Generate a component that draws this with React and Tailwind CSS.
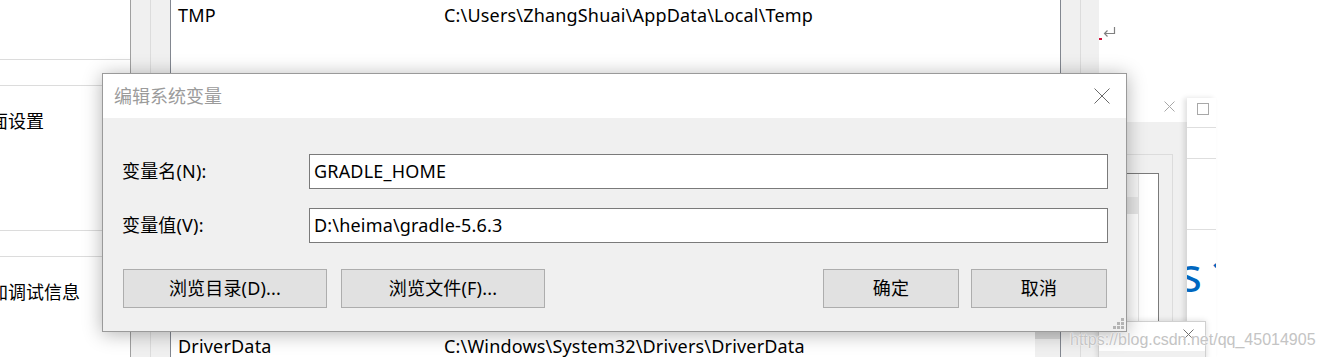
const CloseX = ({ size, color }) => (
  <svg width={size} height={size} viewBox={`0 0 ${size} ${size}`} fill="none">
    <path d={`M0.5 0.5L${size - 0.5} ${size - 0.5}M${size - 0.5} 0.5L0.5 ${size - 0.5}`} stroke={color} strokeWidth="1" />
  </svg>
);

const LeftWindow = () => (
  <div className="absolute left-0 top-0 w-[130px] h-[357px] bg-white overflow-hidden text-[18px] text-black whitespace-nowrap">
    <div className="h-[60px] border-b border-[#dcdcdc]" />
    <div className="h-[26px] border-b border-[#dcdcdc]" />
    <div className="h-[145px] border-b border-[#dcdcdc] pt-[23px]">
      <div className="-ml-[10px] leading-[24px]">面设置</div>
    </div>
    <div className="h-[26px] border-b border-[#dcdcdc]" />
    <div className="pt-[23px]">
      <div className="-ml-[10px] leading-[24px]">加调试信息</div>
    </div>
  </div>
);

const EnvList = () => (
  <div className="absolute left-[130px] top-0 w-[969px] h-[357px] bg-[#f0f0f0] border-l border-[#a0a0a0] flex overflow-hidden">
    <div className="w-[19px]" />
    <div className="w-px bg-[#dcdcdc]" />
    <div className="w-[19px]" />
    <div className="w-[891px] bg-white border-x border-[#828790] flex flex-col text-[18px] text-black tracking-[0.18px]">
      <div className="h-[30px] shrink-0 flex items-center">
        <div className="w-[273px] pl-[7px]">TMP</div>
        <div>C:\Users\ZhangShuai\AppData\Local\Temp</div>
      </div>
      <div className="h-[301px] shrink-0" />
      <div className="h-[30px] shrink-0 flex">
        <div className="w-[273px] pl-[7px] flex items-center">DriverData</div>
        <div className="flex-1 flex items-center">C:\Windows\System32\Drivers\DriverData</div>
        <div className="w-[25px] bg-[#f0f0f0] pt-px">
          <div className="h-[7px] bg-[#d6d6d6]" />
        </div>
      </div>
    </div>
    <div className="w-[19px]" />
    <div className="w-px bg-[#dcdcdc]" />
    <div className="w-[18px]" />
  </div>
);

const BackWindows = () => (
  <>
    <div className="absolute left-[1100px] top-0 w-[87px] h-[357px] bg-[#f0f0f0] flex flex-col">
      <div className="h-[122px] bg-white flex items-end justify-end pr-[12px] pb-[10px]">
        <CloseX size={11} color="#a8a8a8" />
      </div>
      <div className="flex-1 pt-[32px] pl-[10px] pr-[14px] flex flex-col">
        <div className="flex-1 border-t border-r border-[#dcdcdc] pt-[18px] pl-[10px] pr-[13px] flex flex-col">
          <div className="flex-1 border-t border-r border-[#7a7a7a] bg-white flex">
            <div className="flex-1 border-r border-[#e3e3e3] flex flex-col">
              <div className="h-[23px] bg-[#f5f5f5]" />
              <div className="h-[17px] bg-[#e6e6e6]" />
            </div>
            <div className="w-[19px]" />
          </div>
        </div>
      </div>
    </div>

    <svg className="absolute left-[1103px] top-[27px]" width="13" height="11" viewBox="0 0 13 11" fill="none">
      <path d="M11.5 0V6.5H1.5M4.5 3.5L1.5 6.5L4.5 9.5" stroke="#808080" strokeWidth="1.2" />
    </svg>
    <div className="absolute left-[1099px] top-[38px] w-[3px] h-[2px] bg-[#d0103a]" />

    <div className="absolute left-[1187px] top-[98px] w-[29px] h-[259px] bg-white overflow-hidden shadow-[-3px_0_5px_rgba(0,0,0,0.12)] flex flex-col">
      <div className="h-[30px] shrink-0 border-b border-[#dedede] pl-[10px] pt-[5px]">
        <div className="w-[12px] h-[12px] border border-[#a8a8a8]" />
      </div>
      <div className="h-[31px] shrink-0 border-b border-[#dedede]" />
      <div className="h-[71px] shrink-0 border-b border-[#dedede]" />
      <div className="mt-[20px] -ml-[8px] text-[48px] leading-none text-[#0067c0] whitespace-nowrap font-['Noto_Sans',sans-serif]">
        <span>s</span>
        <span className="ml-[7px]">1</span>
      </div>
    </div>

    <div className="absolute left-[1098px] top-[321px] w-[108px] h-[40px] bg-white border border-[#d0d0d0] shadow-[0_0_6px_rgba(0,0,0,0.15)] flex flex-col">
      <div className="h-[29px] flex justify-end pt-[7px] pr-[11px]">
        <CloseX size={11} color="#707070" />
      </div>
      <div className="flex-1 bg-[#f0f0f0]" />
    </div>
  </>
);

const Btn = ({ children, w }) => (
  <button className={`${w} h-[39px] bg-[#e1e1e1] border border-[#adadad] text-[18px] text-black flex items-center justify-center`}>
    {children}
  </button>
);

const EditDialog = () => (
  <div className="absolute left-[102px] top-[73px] w-[1025px] h-[259px] bg-[#f0f0f0] border border-[#9a9a9a] shadow-[0_2px_18px_rgba(0,0,0,0.3)] flex flex-col">
    <div className="h-[44px] bg-white flex items-center justify-between pl-[11px] pr-[16px]">
      <span className="text-[18px] text-[#9b9b9b]">编辑系统变量</span>
      <CloseX size={16} color="#6a6a6a" />
    </div>
    <div className="flex-1 pl-[19px] pr-[18px] pt-[36px] text-[18px] text-black tracking-[0.18px]">
      <div className="flex items-center">
        <label className="w-[187px]">变量名(N):</label>
        <div className="flex-1 h-[35px] bg-white border border-[#7a7a7a] flex items-center pl-[4px]">GRADLE_HOME</div>
      </div>
      <div className="flex items-center mt-[19px]">
        <label className="w-[187px]">变量值(V):</label>
        <div className="flex-1 h-[35px] bg-white border border-[#7a7a7a] flex items-center pl-[4px]">D:\heima\gradle-5.6.3</div>
      </div>
      <div className="flex justify-between mt-[26px] pl-px pr-px">
        <div className="flex gap-[14px]">
          <Btn w="w-[204px]">浏览目录(D)...</Btn>
          <Btn w="w-[204px]">浏览文件(F)...</Btn>
        </div>
        <div className="flex gap-[12px]">
          <Btn w="w-[136px]">确定</Btn>
          <Btn w="w-[136px]">取消</Btn>
        </div>
      </div>
    </div>
    <svg className="absolute right-[2px] bottom-[2px]" width="11" height="11" viewBox="0 0 11 11">
      <rect x="8" y="0" width="3" height="3" fill="#b4b4b4" />
      <rect x="4" y="4" width="3" height="3" fill="#b4b4b4" />
      <rect x="8" y="4" width="3" height="3" fill="#b4b4b4" />
      <rect x="0" y="8" width="3" height="3" fill="#b4b4b4" />
      <rect x="4" y="8" width="3" height="3" fill="#b4b4b4" />
      <rect x="8" y="8" width="3" height="3" fill="#b4b4b4" />
    </svg>
  </div>
);

export default function App() {
  return (
    <div className="relative w-[1323px] h-[357px] overflow-hidden bg-white font-['Noto_Sans','Noto_Sans_CJK_SC',sans-serif]">
      <LeftWindow />
      <EnvList />
      <BackWindows />
      <EditDialog />
      <div className="absolute left-[1070px] top-[328px] text-[16px] text-[#c4c4c4] font-['Liberation_Sans',sans-serif] whitespace-nowrap [text-shadow:0_0_2px_#fff,0_0_1px_#fff]">
        https://blog.csdn.net/qq_45014905
      </div>
    </div>
  );
}
